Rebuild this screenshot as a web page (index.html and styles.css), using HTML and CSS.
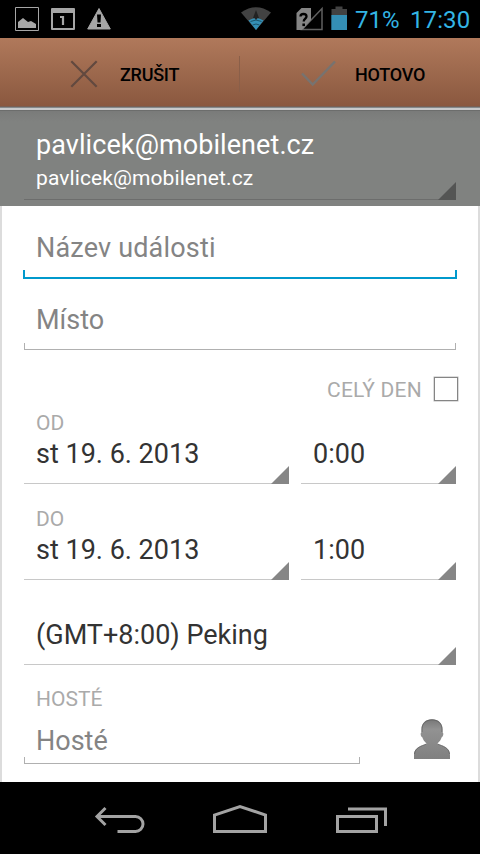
FILE: index.html
```html
<!DOCTYPE html>
<html lang="cs">
<head>
<meta charset="utf-8">
<title>Nová událost</title>
<link rel="stylesheet" href="styles.css">
</head>
<body>
<div class="screen">
  <header class="status">
    <svg class="notices" width="120" height="38" viewBox="0 0 120 38">
      <path d="M15.5 7.5h23v23h-23z" fill="none" stroke="#a6a6a6"/>
      <path d="M18 28v-6l5-4 5 4 3-1 5 3v4z" fill="#a6a6a6"/>
      <path fill-rule="evenodd" fill="#a6a6a6" d="M52 8h22q1 0 1 1v20q0 1-1 1H52q-1 0-1-1V9q0-1 1-1zm1 5v15h20V13z"/>
      <path d="M60 17h3V25" fill="none" stroke="#a6a6a6" stroke-width="2.200"/>
      <path fill="#a6a6a6" stroke="#a6a6a6" stroke-linejoin="round" d="M99 8.500L110.300 29H87.700z"/>
      <path d="M97 14.500h4l-.5 8h-3zM97 24h4v3h-4z" fill="#000"/>
    </svg>
    <svg class="signals" width="110" height="38" viewBox="240 0 110 38">
      <path d="M241 12.500Q256 2 271 12.500L256 30z" fill="#424242"/>
      <path d="M256 10l-3 8h6z" fill="#222"/>
      <path d="M248.500 20.500Q256 15.500 263.500 20.500L256 30z" fill="#348fb5"/>
      <path d="M250.500 21.500q5.500-3 11 0M252.500 25q3.500-2 7 0" fill="none" stroke="#1c5268"/>
      <path d="M254.500 18h3l-1.500 2z" fill="#222"/>
      <path d="M302 29.500h20V8.500z" fill="#000" stroke="#606060" stroke-width="1.500"/>
      <path d="M301.500 8H311v12l-9 10h-5.500V13z" fill="#858585"/>
      <path d="M300.500 16.500q0-2.500 3-2.500t3 2.500c0 2-2.800 2.300-2.800 5" fill="none" stroke="#000" stroke-width="2.300"/>
      <path d="M302.400 23.500h2.600v2.600h-2.600z" fill="#000"/>
      <path d="M335.500 6.500h7V9h4.500v6h-15.500V9h4z" fill="#424242"/>
      <path d="M331.300 15H347v15h-15.700z" fill="#348fb5"/>
    </svg>
    <span class="battery">71%</span>
    <span class="clock">17:30</span>
  </header>

  <div class="actions">
    <div class="action cancel">
      <svg width="28" height="28" viewBox="0 0 28 28"><path d="M1.300 1.300l25.400 25.400M26.700 1.300L1.300 26.700" stroke="#62493f" stroke-width="2.200"/></svg>
      <span>ZRUŠIT</span>
    </div>
    <div class="action done">
      <svg width="36" height="28" viewBox="0 0 36 28"><path d="M1 13.500l10.700 11L34 1.500" fill="none" stroke="#777370" stroke-width="2.500"/></svg>
      <span>HOTOVO</span>
    </div>
  </div>

  <section class="account">
    <div class="spinner dark">
      <div class="account-name"><span>pavlicek@mobilenet.cz</span></div>
      <div class="account-mail"><span>pavlicek@mobilenet.cz</span></div>
    </div>
  </section>

  <main class="form">
    <div class="field focused"><span class="t-title">Název události</span></div>
    <div class="field place"><span>Místo</span></div>
    <div class="allday"><span>CELÝ DEN</span><span class="checkbox"></span></div>
    <div class="label">OD</div>
    <div class="when">
      <div class="spinner"><span>st 19. 6. 2013</span></div>
      <div class="spinner"><span>0:00</span></div>
    </div>
    <div class="label next">DO</div>
    <div class="when">
      <div class="spinner"><span>st 19. 6. 2013</span></div>
      <div class="spinner"><span>1:00</span></div>
    </div>
    <div class="spinner zone"><span>(GMT+8:00) Peking</span></div>
    <div class="label guests-label">HOSTÉ</div>
    <div class="guests">
      <div class="field guest"><span>Hosté</span></div>
      <svg class="person" width="36" height="40" viewBox="0 0 36 40">
        <defs>
          <linearGradient id="body" x2="0" y2="1"><stop stop-color="#777"/><stop offset=".25" stop-color="#929292"/><stop offset="1" stop-color="#808080"/></linearGradient>
        </defs>
        <path fill="url(#body)" d="M18 .3c6.500 0 10.500 4 10.500 10v3c1.500.5.800 4.500-.8 5-.8 2.500-2.200 4.500-4.200 6.200C25 26.500 36 27 36 36v4H0v-4c0-9 11-9.500 12.500-11.500-2-1.700-3.400-3.700-4.200-6.200-1.600-.5-2.300-4.500-.8-5v-3C7.500 4.300 11.500.3 18 .3z"/>
        <path fill="none" stroke="#606060" stroke-opacity=".8" d="M8 13v-3C8 4.500 12 .9 18 .9s10 3.600 10 9.100v3M.5 35c.5-6.500 7-8 11.500-9.800M35.500 35c-.5-6.500-7-8-11.500-9.800"/>
      </svg>
    </div>
  </main>

  <nav class="nav">
    <svg width="480" height="72" viewBox="0 782 480 72" fill="none" stroke="#a3a3a3" stroke-width="3">
      <path d="M97 816.500h38.500a7.500 7.500 0 0 1 0 15h-18M105.500 808l-8.500 8.500 8.500 8.500"/>
      <path d="M214.500 831.500h51V815L240 806.500 214.500 815z"/>
      <path d="M337.500 816.500h39v15h-39zM348 809h37.500v17"/>
    </svg>
  </nav>
</div>
</body>
</html>
```

FILE: styles.css
```css
* { box-sizing: border-box; }
body {
  margin: 0;
  background: #000;
  font-family: Roboto, "Noto Sans", sans-serif;
  font-size: 27px;
  line-height: 32px;
  color: #333;
}
svg { display: block; flex: none; }
span { white-space: nowrap; }
.screen { width: 480px; height: 854px; display: flex; flex-direction: column; overflow: hidden; }

.status { height: 38px; display: flex; background: #000; color: #33b5e5; font-size: 24px; line-height: 40px; }
.signals { margin-left: 120px; }
.battery { width: 60px; padding-left: 5px; }
.clock { letter-spacing: .1px; }

.actions {
  height: 68px;
  display: flex;
  background: linear-gradient(#b0795b, #8a583f);
  color: #000;
  font-size: 18px;
  font-weight: 500;
  letter-spacing: -.25px;
}
.action { width: 240px; display: flex; align-items: center; padding-top: 4px; }
.action span { padding-top: 2px; }
.cancel { padding-left: 70px; gap: 22px; }
.done { padding-left: 61px; gap: 18px; position: relative; }
.done::before { content: ""; position: absolute; left: -1px; top: 18px; width: 1px; height: 36px; background: #8a5f49; }

.account {
  height: 100px;
  padding: 23px 24px 0;
  background: linear-gradient(#795f54 0 1px, #84898b 1px 2px, #c8c9ca 2px 4px, #6c6d6c 4px 5px, #7a7b7a 5px, #808280 16px);
  color: #fff;
}
.account-name { height: 37px; letter-spacing: .08px; }
.account-mail { font-size: 21px; line-height: 24px; letter-spacing: .1px; }

.spinner { position: relative; padding-left: 12px; height: 46px; border-bottom: 1px solid #c8c8c8; }
.spinner::after {
  content: "";
  position: absolute;
  right: 0;
  bottom: -1px;
  width: 18px;
  height: 18px;
  background: #868686;
  clip-path: polygon(100% 0, 100% 100%, 0 100%);
}
.spinner.dark { height: 71px; border-color: #6c6d6c; }
.spinner.dark::after { background: #545554; }

.form {
  height: 576px;
  padding: 26px 22px 0;
  background: #fff;
  border: solid #dcdcdc;
  border-width: 0 2px;
}
.field { position: relative; height: 46px; padding-left: 12px; color: #848484; }
.field::after {
  content: "";
  position: absolute;
  left: 0;
  right: 0;
  bottom: 0;
  height: 6px;
  border: solid #b0b0b0;
  border-width: 0 1px 1px;
}
.focused { height: 47px; }
.focused::after { left: -1px; right: -1px; height: 7px; border-color: #0099cc; border-width: 0 2px 2px; }
.t-title { letter-spacing: .18px; }
.place { margin-top: 25px; }

.allday { display: flex; justify-content: flex-end; align-items: center; height: 24px; margin: 27px -2px 0 0; color: #aaa; font-size: 21px; line-height: 24px; letter-spacing: .25px; }
.allday span:first-child { padding-top: 2px; }
.checkbox { width: 24px; height: 24px; margin-left: 12px; border: 1px solid #858585; box-shadow: 0 0 0 .5px #bbb; }
.label { height: 27px; margin-top: 10px; padding-left: 12px; color: #aaa; font-size: 21px; line-height: 24px; }
.next { margin-top: 23px; }
.when { display: grid; grid-template-columns: 265px 155px; gap: 12px; }
.zone { margin-top: 39px; }
.guests-label { margin-top: 22px; height: 38px; }
.guests { display: flex; }
.guest { width: 336px; height: 39px; }
.person { margin: -6px 0 0 54px; }
.nav { height: 72px; background: #000; }
```
